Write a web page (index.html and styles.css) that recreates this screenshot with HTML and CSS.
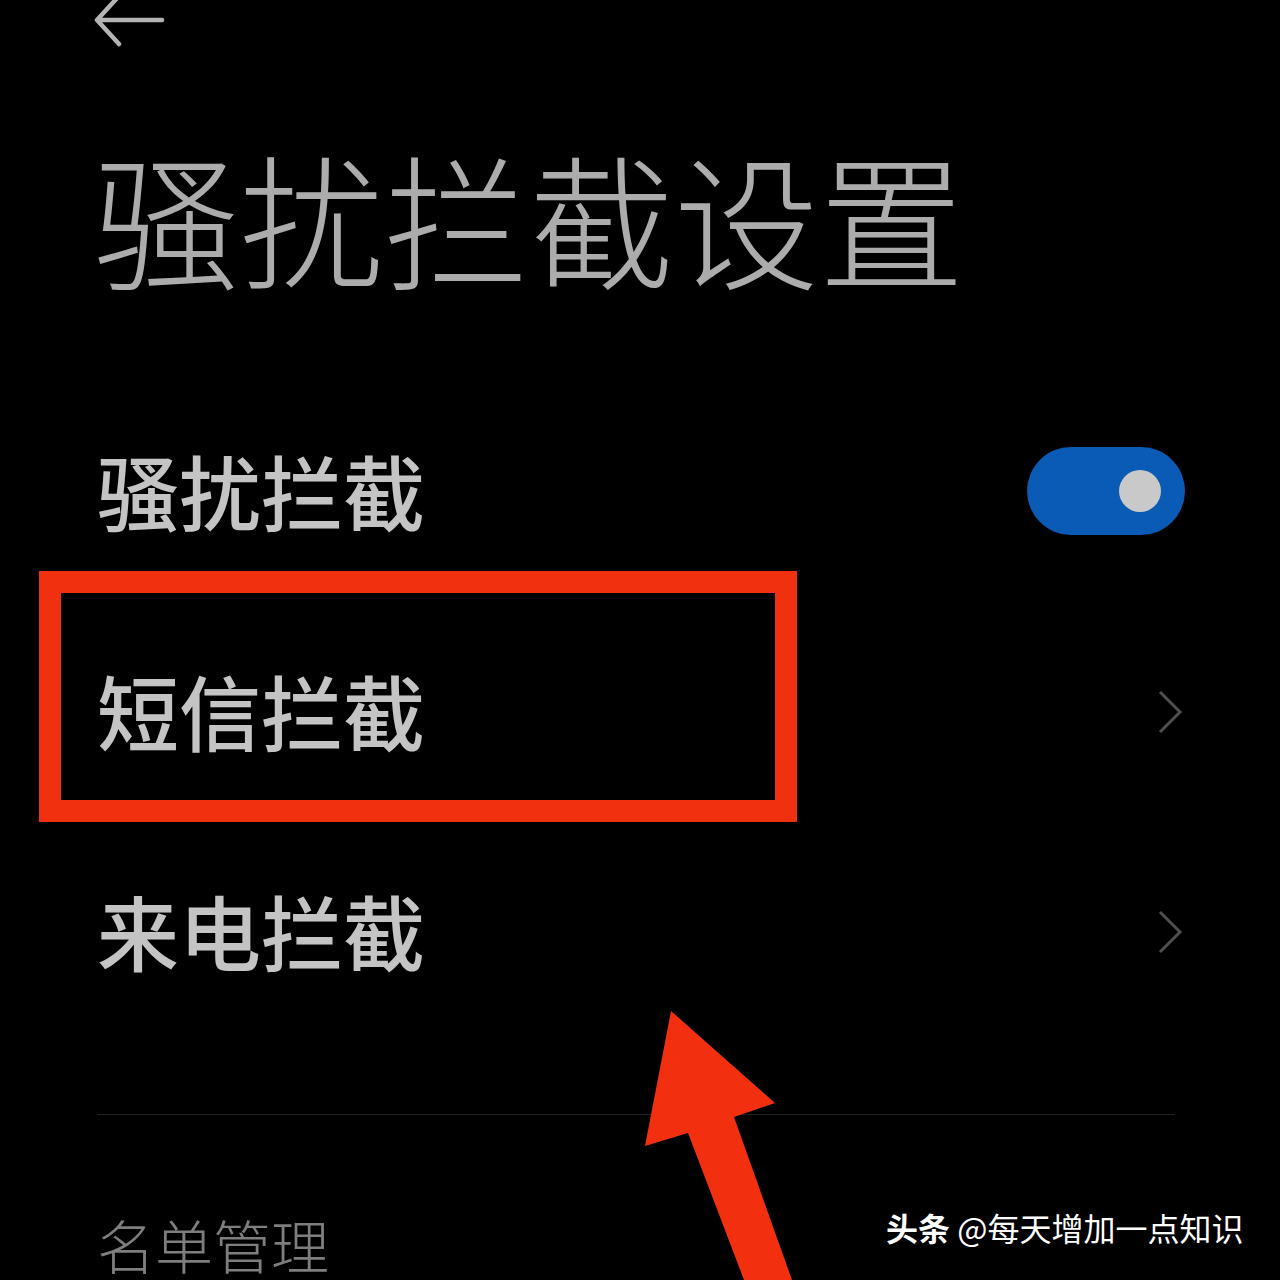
FILE: index.html
```html
<!DOCTYPE html>
<html lang="zh-CN">

<head>
    <meta charset="UTF-8">
    <title>骚扰拦截设置</title>
    <link rel="stylesheet" href="styles.css">
</head>

<body>
    <div class="page">
        <div class="back">
            <svg width="72" height="46" viewBox="0 0 72 46">
                <path d="M24 -4 L2 20 L24 44 M2 20 L67 20" fill="none" stroke="#b3b3b3" stroke-width="4.5" stroke-linecap="round" stroke-linejoin="round"/>
            </svg>
        </div>

        <h1 class="title">骚扰拦截设置</h1>

        <div class="row">
            <span class="label">骚扰拦截</span>
            <span class="toggle"><span class="knob"></span></span>
        </div>
        <div class="row">
            <span class="label">短信拦截</span>
            <svg class="chev" width="26" height="44" viewBox="0 0 26 44">
                <path d="M3 2 L23 22 L3 42" fill="none" stroke="#4f4f4f" stroke-width="3"/>
            </svg>
        </div>
        <div class="row">
            <span class="label">来电拦截</span>
            <svg class="chev" width="26" height="44" viewBox="0 0 26 44">
                <path d="M3 2 L23 22 L3 42" fill="none" stroke="#4f4f4f" stroke-width="3"/>
            </svg>
        </div>

        <div class="divider"></div>

        <div class="section">名单管理</div>
    </div>

    <!-- annotations over the screenshot -->
    <div class="mark"></div>
    <svg class="arrow" width="220" height="280" viewBox="600 1000 220 280">
        <polygon points="671,1011 775,1103 734,1117 792,1280 744,1280 688,1133 645,1146" fill="#f2300f"/>
    </svg>

    <div class="watermark"><b>头条</b> @每天增加一点知识</div>
</body>

</html>
```

FILE: styles.css
```css
html, body {
    margin: 0;
    background: #000;
}

body {
    width: 1280px;
    height: 1280px;
    overflow: hidden;
    position: relative;
    font-family: "Noto Sans CJK SC", "Noto Sans", sans-serif;
}

.page {
    padding: 0 95px 0 97px;
}

.back {
    height: 46px;
    margin-left: -2px;
}

.back svg {
    display: block;
    overflow: visible;
}

.title {
    margin: 98px 0 0 -3px;
    font-size: 145px;
    line-height: 145px;
    font-weight: 300;
    color: #acacac;
    letter-spacing: 0;
}

.row {
    height: 220px;
    display: flex;
    align-items: center;
    justify-content: space-between;
}

.title + .row {
    margin-top: 90px;
}

.label {
    font-size: 82px;
    font-weight: 500;
    color: #c4c4c4;
}

.toggle {
    width: 158px;
    height: 88px;
    border-radius: 44px;
    background: #0a5bb5;
    display: flex;
    align-items: center;
    justify-content: flex-end;
    padding-right: 24px;
    box-sizing: border-box;
    margin-top: 4px;
}

.knob {
    width: 42px;
    height: 42px;
    border-radius: 50%;
    background: #c9c9c9;
}

.chev {
    display: block;
    margin-right: 2px;
    margin-top: 6px;
}

.divider {
    height: 1px;
    background: #232323;
    margin: 75px 10px 0 0;
}

.section {
    margin-top: 100px;
    font-size: 58px;
    line-height: 58px;
    font-weight: 300;
    color: #7e7e7e;
}

.mark {
    position: absolute;
    left: 39px;
    top: 571px;
    width: 758px;
    height: 251px;
    border: 22px solid #f1300f;
    box-sizing: border-box;
}

.arrow {
    position: absolute;
    left: 600px;
    top: 1000px;
}

.watermark {
    position: absolute;
    left: 886px;
    top: 1207px;
    font-size: 32px;
    line-height: 40px;
    color: #fff;
    white-space: nowrap;
}

.watermark b {
    font-weight: 700;
}
```
